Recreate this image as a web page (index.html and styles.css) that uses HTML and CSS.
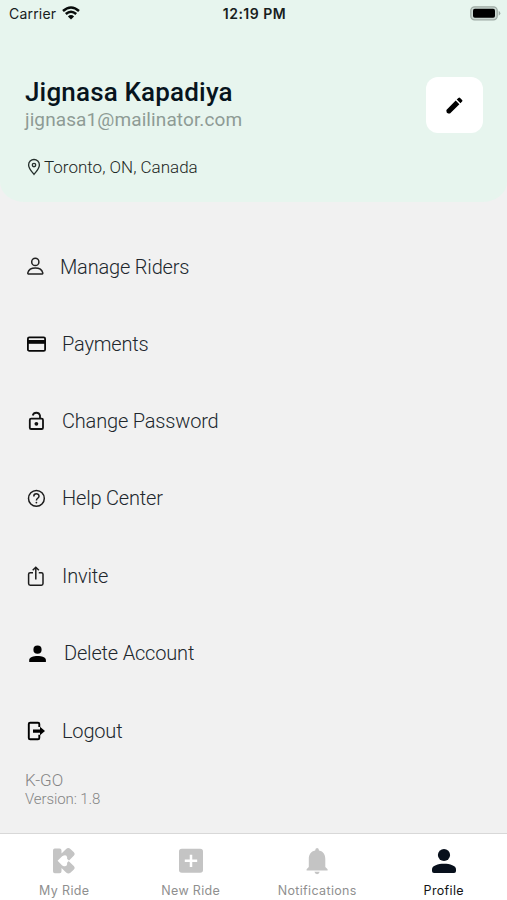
FILE: index.html
```html
<!DOCTYPE html>
<html lang="en">
<head>
<meta charset="utf-8">
<meta name="viewport" content="width=device-width, initial-scale=1">
<title>Profile</title>
<link rel="stylesheet" href="styles.css">
</head>
<body>
<div class="app">
  <header class="header">
    <div class="status">
      <div class="carrier"><span>Carrier</span>
        <svg width="18" height="14" viewBox="0 0 18 14" fill="none" stroke="#080c0b" stroke-width="2.5"><path d="M1 5Q9-2 17 5"/><path d="M3.8 8Q9 3.4 14.2 8"/><path d="M9 13.5L5.9 10.4Q9 7.8 12.1 10.4Z" fill="#080c0b" stroke="none"/></svg>
      </div>
      <time class="clock">12:19 PM</time>
      <svg class="battery" width="31" height="15" viewBox="0 0 31 15"><rect x=".8" y=".8" width="26.4" height="13" rx="3.8" fill="#cbd8d2" stroke="#9eaaa4" stroke-width="1.3"/><rect x="3" y="2.8" width="22" height="9" rx="1.8" fill="#000"/><path d="M28.7 4.8Q32 7.2 28.7 9.8Z" fill="#9eaaa4"/></svg>
    </div>
    <div class="identity">
      <div>
        <h1 class="name">Jignasa Kapadiya</h1>
        <p class="email">jignasa1@mailinator.com</p>
      </div>
      <button class="edit" aria-label="Edit profile">
        <svg width="24" height="24" viewBox="0 0 24 24"><path d="M3.4 18V16.9L12.7 7.6L16.4 11.2L7 20.5H5.2Q3.4 20.3 3.4 18ZM13.7 6.6L15.4 4.9Q16.3 4.1 17.1 4.9L19.1 6.9Q19.9 7.7 19.1 8.5L17.4 10.2Z" fill="#000"/></svg>
      </button>
    </div>
    <div class="place">
      <svg width="14" height="18" viewBox="0 0 14 18" fill="none" stroke="#26302d" stroke-width="1.35"><path d="M7 16.4C5.6 14.6 1.6 10.4 1.6 6.9a5.4 5.4 0 0 1 10.8 0C12.4 10.4 8.4 14.6 7 16.4Z"/><circle cx="7" cy="7" r="1.7"/></svg>
      <span>Toronto, ON, Canada</span>
    </div>
  </header>

  <main class="content">
    <ul class="menu">
      <li class="item item-riders">
        <svg class="icon" viewBox="0 0 24 24" fill="none" stroke="#222" stroke-width="1.5"><circle cx="11.3" cy="6.9" r="3.6"/><path d="M4.4 19.1H18.2a1 1 0 0 0 .6-1.2C18 14.8 15 13.1 11.3 13.1S4.6 14.8 3.8 17.9a1 1 0 0 0 .6 1.2Z"/></svg>
        <span class="label">Manage Riders</span>
      </li>
      <li class="item item-payments">
        <svg class="icon" viewBox="0 0 24 24" fill="none" stroke="#090909" stroke-width="1.8"><rect x="3.9" y="5.4" width="17.2" height="13.4" rx="1.4"/><path d="M4 9.9H21" stroke-width="3.8"/></svg>
        <span class="label">Payments</span>
      </li>
      <li class="item item-password">
        <svg class="icon" viewBox="0 0 24 24" fill="none" stroke="#111" stroke-width="1.8"><rect x="5.8" y="9.6" width="13.2" height="10.4" rx="1.3"/><path d="M8.7 6.5a3.8 3.8 0 0 1 7.3 0V9.6"/><circle cx="12.4" cy="14.8" r="1.9" fill="#111" stroke="none"/></svg>
        <span class="label">Change Password</span>
      </li>
      <li class="item item-help">
        <svg class="icon" viewBox="0 0 24 24" fill="none" stroke="#1c1c1c" stroke-width="1.5"><circle cx="12.4" cy="12.4" r="7.9"/><path d="M9.8 10.4C9.8 7 15 7.1 15 10.2C15 12.2 12.4 12.3 12.4 14.4"/><circle cx="12.4" cy="16.6" r=".9" fill="#1c1c1c" stroke="none"/></svg>
        <span class="label">Help Center</span>
      </li>
      <li class="item item-invite">
        <svg class="icon" viewBox="0 0 24 24" fill="none" stroke="#1c1c1c" stroke-width="1.5"><path d="M9 8.7H6.2a1.6 1.6 0 0 0-1.6 1.6V19.6a1.6 1.6 0 0 0 1.6 1.6H17.4a1.6 1.6 0 0 0 1.6-1.6V10.3a1.6 1.6 0 0 0-1.6-1.6H14.8M11.8 15.4V3.5M8.7 6.3L11.8 3.3L14.9 6.3"/></svg>
        <span class="label">Invite</span>
      </li>
      <li class="item item-delete">
        <svg class="icon" viewBox="0 0 24 24" fill="#000"><circle cx="13.5" cy="8.7" r="4.1"/><path d="M5.2 21V19C5.2 13.6 21.9 13.6 21.9 19V21Z"/></svg>
        <span class="label">Delete Account</span>
      </li>
      <li class="item item-logout">
        <svg class="icon" viewBox="0 0 24 24" fill="none" stroke="#000" stroke-width="1.9"><path d="M15.3 8V5Q15.3 3.7 14 3.7H6.1Q4.8 3.7 4.8 5V18.9Q4.8 20.2 6.1 20.2H14Q15.3 20.2 15.3 18.9V15.8"/><path d="M9 10.5H16V7.8L21 12.1L16 16.3V13.7H9Z" fill="#000" stroke="none"/></svg>
        <span class="label">Logout</span>
      </li>
    </ul>
    <footer class="about">
      <p class="brand">K-GO</p>
      <p class="version">Version: 1.8</p>
    </footer>
  </main>

  <nav class="tabs">
    <a class="tab">
      <svg width="28" height="28" viewBox="0 0 28 28" fill="#c4c4c4"><path d="M4.8 1.5H9.6Q11.5 1.5 11.5 3.4V6.6L16.1 2.1Q18.3.2 20.4 2L23.9 5.2Q25.6 6.9 24 8.6L18.6 14L24 19.3Q25.6 21 23.9 22.6L20.4 25.8Q18.3 27.4 16.1 25.5L11.5 21V24.2Q11.5 26.2 9.6 26.2H4.8Q3 26.2 3 24.2V3.4Q3 1.5 4.8 1.5Z"/><path d="M7.6 13.8L12.2 9.2Q16.6 6.8 17.2 10.6Q16.4 12 19.2 13.8Q16.4 15.6 17.2 17Q16.6 20.6 12.2 18.4Z" fill="#fff"/></svg>
      <span>My Ride</span>
    </a>
    <a class="tab">
      <svg width="28" height="28" viewBox="0 0 28 28"><rect x="2" y="1.8" width="24" height="24" rx="2.8" fill="#c4c4c4"/><path d="M14 7.7V20M7.8 13.8H20.2" stroke="#fff" stroke-width="2.5"/></svg>
      <span>New Ride</span>
    </a>
    <a class="tab">
      <svg width="28" height="28" viewBox="0 0 28 28" fill="#c4c4c4"><path d="M12.2 3.5Q12.2.9 14.1.9T16 3.5C20.5 4.4 22.3 7.7 22.3 12.2V20.1L24.6 22.2V23.4H3.6V22.2L5.8 20.1V12.2C5.8 7.7 7.7 4.4 12.2 3.5ZM11.4 24.8H16.7Q16.2 27.2 14.1 27.2T11.4 24.8Z"/></svg>
      <span>Notifications</span>
    </a>
    <a class="tab tab-active">
      <svg width="28" height="28" viewBox="0 0 28 28" fill="#08101c"><circle cx="14" cy="8" r="6.1"/><path d="M2 24V22.4C2 15 26 15 26 22.4V24Q26 26 24 26H4Q2 26 2 24Z"/></svg>
      <span>Profile</span>
    </a>
  </nav>
</div>
</body>
</html>
```

FILE: styles.css
```css
* { box-sizing: border-box; }
body { margin: 0; font-family: Roboto, "Liberation Sans", sans-serif; }
h1, p, ul { margin: 0; padding: 0; }
svg { display: block; flex-shrink: 0; }

.app { width: 507px; height: 900px; display: flex; flex-direction: column; background: #f1f1f1; overflow: hidden; }

.header { height: 202px; flex-shrink: 0; background: #e7f5ee; border-radius: 0 0 25px 25px / 0 0 20px 20px; }
.status { height: 28px; padding: 0 7px 2px 9px; display: grid; grid-template-columns: 1fr auto 1fr; align-items: center; font-family: Inter, "Liberation Sans", sans-serif; font-size: 14px; color: #17201d; }
.carrier { display: flex; align-items: center; gap: 6px; letter-spacing: 0.2px; }
.clock { font-weight: 600; font-size: 14px; letter-spacing: 0.5px; }
.battery { justify-self: end; margin-right: -1px; }

.identity { height: 105px; padding: 49px 24px 0 25px; display: flex; justify-content: space-between; }
.name { font-size: 26px; line-height: 31px; font-weight: 500; letter-spacing: 0.17px; color: #07141d; white-space: nowrap; }
.email { font-size: 19px; line-height: 23px; letter-spacing: 0.1px; color: #8e9b95; }
.edit { width: 57px; height: 56px; flex-shrink: 0; padding: 0; border: 0; border-radius: 12px; background: #fff; display: flex; align-items: center; justify-content: center; }
.place { margin: 24px 0 0 27px; height: 20px; display: flex; align-items: center; gap: 3px; font-size: 17px; font-weight: 300; color: #1c2724; }

.content { height: 630.5px; flex-shrink: 0; padding-top: 26px; }
.menu { list-style: none; }
.item { height: 77.3px; padding-left: 24px; display: flex; align-items: center; gap: 14px; }
.item-riders { gap: 12px; }
.item-help { padding-bottom: 1px; }
.item-delete { gap: 16px; }
.item-logout { padding-top: 1px; }
.icon { width: 24px; height: 24px; }
.label { font-size: 20px; line-height: 24px; font-weight: 300; letter-spacing: -0.18px; color: #20272d; }
.about { padding: 1px 0 0 25px; font-weight: 300; color: #858585; }
.brand { font-size: 17px; line-height: 20px; }
.version { font-size: 15px; line-height: 19px; letter-spacing: -0.1px; }

.tabs { height: 68px; flex-shrink: 0; display: grid; grid-template-columns: repeat(4, 1fr); background: #fff; border-top: 1px solid #d8d8d8; padding-left: 1px; }
.tab { display: flex; flex-direction: column; align-items: center; padding-top: 13px; gap: 7px; font-family: Inter, "Liberation Sans", sans-serif; font-size: 12.5px; line-height: 17px; letter-spacing: 0.35px; color: #8f8f8f; }
.tab-active { color: #141414; }
```
